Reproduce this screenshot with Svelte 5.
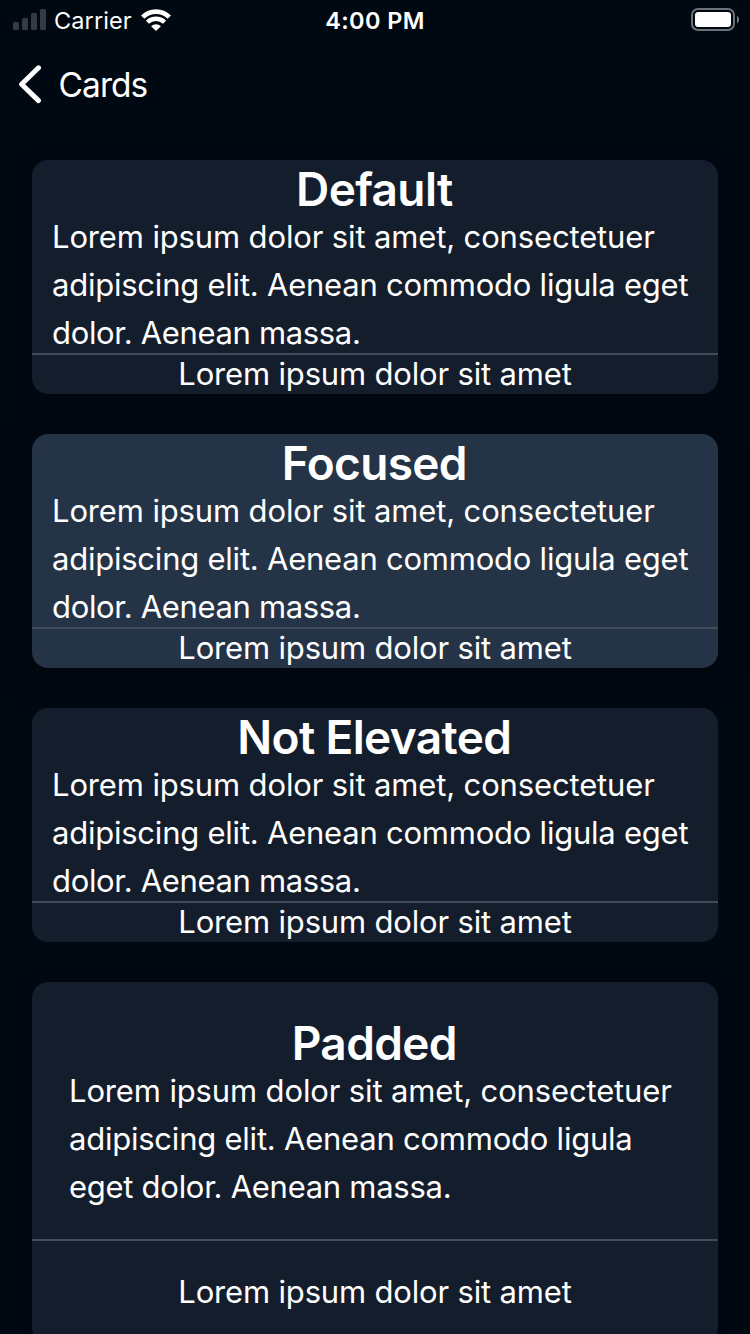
<script>
  const lorem = 'Lorem ipsum dolor sit amet, consectetuer';
  const cards = [
    { title: 'Default', kind: '', lines: [lorem, 'adipiscing elit. Aenean commodo ligula eget', 'dolor. Aenean massa.'] },
    { title: 'Focused', kind: 'focused', lines: [lorem, 'adipiscing elit. Aenean commodo ligula eget', 'dolor. Aenean massa.'] },
    { title: 'Not Elevated', kind: 'flat', lines: [lorem, 'adipiscing elit. Aenean commodo ligula eget', 'dolor. Aenean massa.'] },
    { title: 'Padded', kind: 'padded', lines: [lorem, 'adipiscing elit. Aenean commodo ligula', 'eget dolor. Aenean massa.'] }
  ];
</script>

<main class="screen">
  <div class="status">
    <div class="left">
      <svg width="34" height="22" viewBox="0 0 34 22" fill="#363b43">
        <rect x="0" y="13" width="6" height="8" rx="1.6" />
        <rect x="9" y="9" width="6" height="12" rx="1.6" />
        <rect x="18" y="4" width="6" height="17" rx="1.6" />
        <rect x="27" y="0" width="6" height="21" rx="1.6" />
      </svg>
      <span class="carrier">Carrier</span>
      <svg class="wifi" width="30" height="22" viewBox="0 0 30 22" fill="none" stroke="#fff">
        <path d="M1.7 8.1A19 19 0 0 1 28.3 8.1" stroke-width="4.6" />
        <path d="M6.5 13.3A12 12 0 0 1 23.5 13.3" stroke-width="4.4" />
        <path d="M15 22L10.1 17.3A6.8 6.8 0 0 1 19.9 17.3Z" fill="#fff" stroke="none" />
      </svg>
    </div>
    <span class="time">4:00 PM</span>
    <svg class="battery" width="48" height="24" viewBox="0 0 48 24">
      <rect x="1" y="1" width="42" height="21" rx="6" fill="none" stroke="#6c7077" stroke-width="2" />
      <rect x="4" y="4" width="36" height="15" rx="3.3" fill="#fff" />
      <path d="M46 7.7C48.6 9 48.6 14 46 15.3Z" fill="#777b81" />
    </svg>
  </div>

  <header>
    <svg width="24" height="40" viewBox="0 0 24 40" fill="none" stroke="#fff" stroke-width="5" stroke-linecap="round" stroke-linejoin="round">
      <path d="M20.5 3.8L3.6 20.2L20.5 36.6" />
    </svg>
    <span class="back">Cards</span>
  </header>

  <div class="list">
    {#each cards as card}
      <section class="card {card.kind}">
        <div class="content">
          <h2>{card.title}</h2>
          <div class="copy">
            {#each card.lines as line}
              <p>{line}</p>
            {/each}
          </div>
        </div>
        <footer><span>Lorem ipsum dolor sit amet</span></footer>
      </section>
    {/each}
  </div>
</main>

<style>
  :global(body) {
    background: #000811;
  }
  .screen {
    width: 750px;
    height: 1334px;
    overflow: hidden;
    background: #000811;
    color: #fff;
    font-family: Inter, "Liberation Sans", sans-serif;
    white-space: nowrap;
  }
  .status {
    display: grid;
    grid-template-columns: 1fr auto 1fr;
    align-items: start;
    height: 40px;
  }
  .left {
    display: flex;
    align-items: flex-start;
    padding: 9px 0 0 13px;
  }
  .left svg {
    flex: none;
  }
  .carrier {
    flex: none;
    margin: -3px 0 0 7px;
    width: 87px;
    font-size: 23.5px;
    line-height: 30px;
    letter-spacing: 0.1px;
  }
  .time {
    padding-top: 6px;
    font-size: 23.5px;
    line-height: 30px;
    font-weight: 560;
    letter-spacing: 0.4px;
  }
  .battery {
    justify-self: end;
    margin: 8px 11px 0 0;
  }
  header {
    display: flex;
    align-items: center;
    height: 88px;
    padding-left: 18px;
  }
  .back {
    margin-left: 16.5px;
    padding-top: 1px;
    font-size: 33.5px;
    line-height: 40px;
    letter-spacing: -0.95px;
  }
  .list {
    display: flex;
    flex-direction: column;
    gap: 40px;
    padding: 32px 32px 0;
  }
  .card {
    flex: none;
    border-radius: 16px;
    background: #141d2c;
    box-shadow: 0 2px 14px rgba(0, 0, 0, 0.14);
  }
  .focused {
    background: #253346;
    box-shadow: 0 8px 36px rgba(0, 0, 0, 0.18);
  }
  .flat {
    box-shadow: none;
  }
  .content {
    display: flex;
    flex-direction: column;
    height: 193px;
  }
  h2 {
    margin: 0 1.4px 0 0;
    height: 53px;
    font-size: 46px;
    line-height: 59px;
    font-weight: 600;
    text-align: center;
    letter-spacing: -0.65px;
  }
  .copy {
    padding-left: 20px;
  }
  p {
    margin: 0;
    font-size: 31px;
    line-height: 48px;
    letter-spacing: -0.14px;
  }
  p:nth-child(2) {
    letter-spacing: -0.23px;
  }
  p:nth-child(3) {
    letter-spacing: -0.34px;
  }
  .padded p:nth-child(3) {
    letter-spacing: -0.28px;
  }
  footer {
    height: 39px;
    border-top: 2px solid #414b59;
    font-size: 31px;
    line-height: 38px;
    text-align: center;
    letter-spacing: -0.17px;
  }
  .padded .content {
    height: 225px;
    padding-top: 32px;
  }
  .padded .copy {
    padding-left: 37px;
  }
  .padded footer {
    height: 71px;
    padding-top: 32px;
  }
</style>
